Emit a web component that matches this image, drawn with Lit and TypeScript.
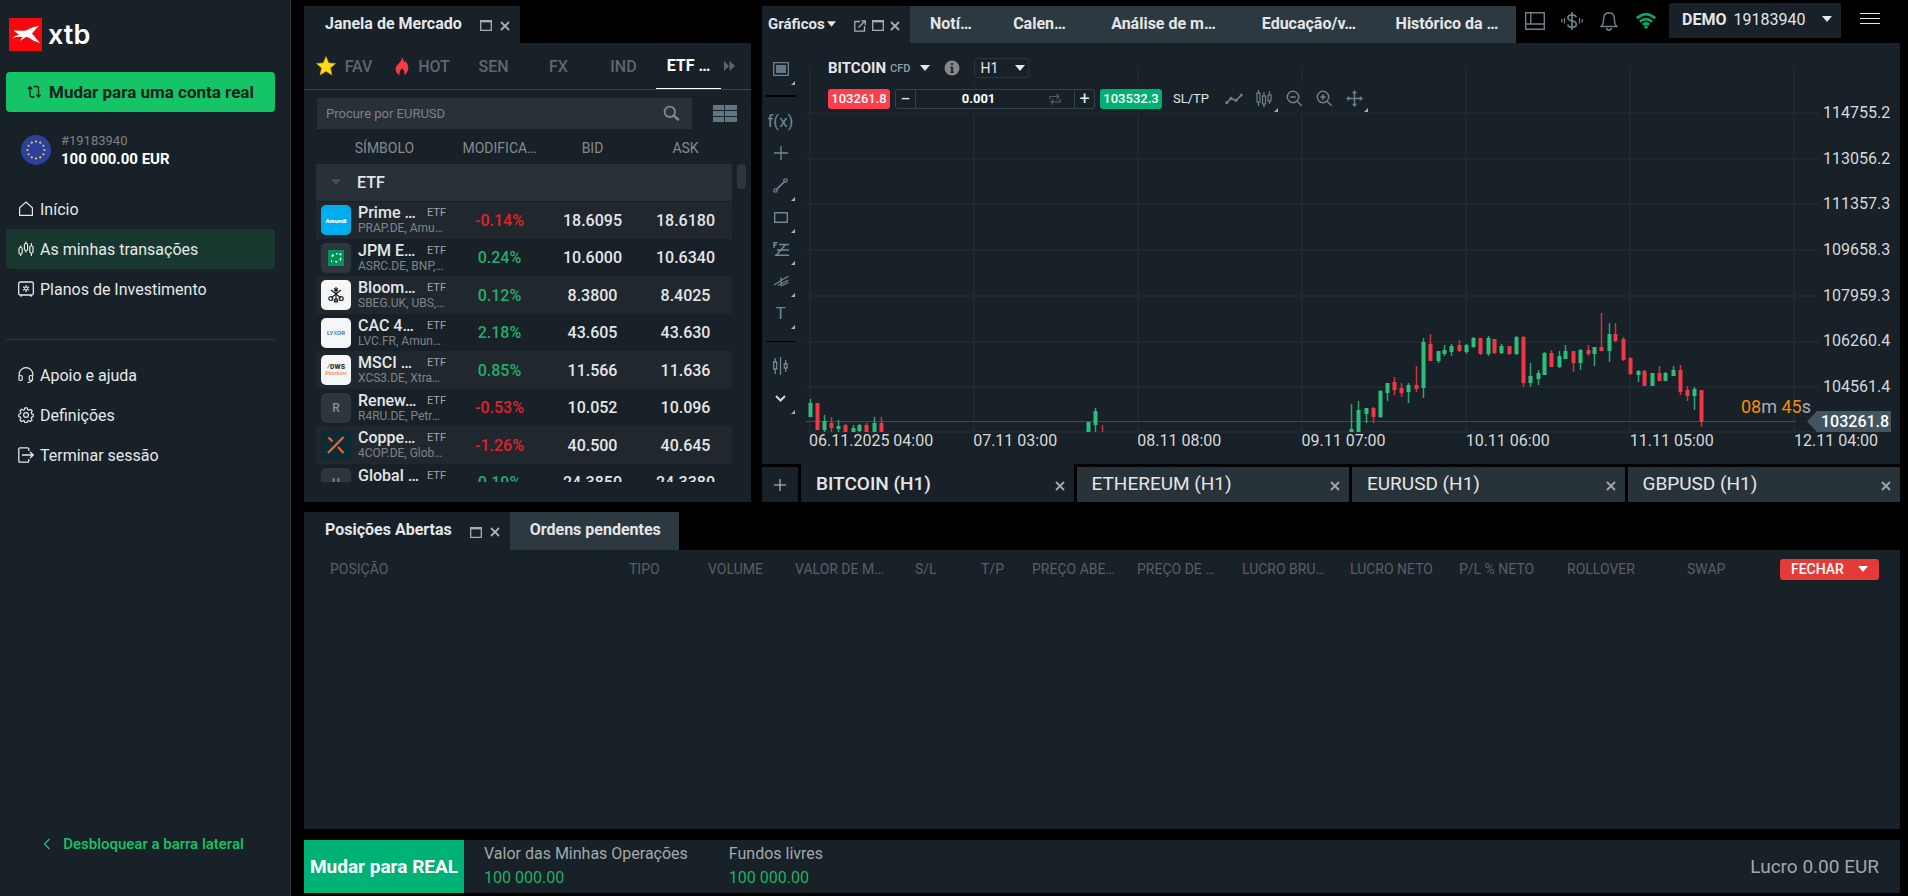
import { LitElement, html, css, svg, type TemplateResult, type SVGTemplateResult } from "lit";
import { customElement } from "lit/decorators.js";
import { classMap } from "lit/directives/class-map.js";

/* ---------- icons ---------- */

const box = (w: number, h: number, body: SVGTemplateResult): TemplateResult => html`
  <svg width=${w} height=${h} viewBox="0 0 ${w} ${h}" fill="none" stroke="currentColor" aria-hidden="true">${body}</svg>
`;

const icons = {
  swap: () => box(14, 14, svg`<path stroke-width="1.3" d="M3 2.2v8.3q0 1.500 1.500 1.500H7.500M1 4l2-2.300L5 4M6.500 1.500H10q1.500 0 1.500 1.500v8.500M9.500 9.800l2 2.300 2-2.300"/>`),
  home: () => box(16, 16, svg`<path stroke-width="1.2" d="M1.600 14.400V6.800L8 1l6.400 5.800v7.600z"/>`),
  candles: () => box(16, 16, svg`<g stroke-width="1.200"><rect x="1" y="6.500" width="3.200" height="6.500" rx="1.200"/><path d="M2.600 4.500v2M2.600 13v2"/><rect x="6.400" y="2.500" width="3.200" height="7" rx="1.200"/><path d="M8 .5v2M8 9.500v2"/><rect x="11.800" y="5" width="3.200" height="7" rx="1.200"/><path d="M13.400 2v3M13.400 12v3"/></g>`),
  safe: () => box(16, 16, svg`<rect x=".7" y="1" width="14.600" height="13" rx="1.500" stroke-width="1.300"/><path d="M3 14v1.800M13 14v1.800" stroke-width="1.500"/><path stroke-width="1.200" d="M8 4v7M5 5.700l6 3.600M11 5.700L5 9.300"/><circle cx="8" cy="7.500" r="1.500" fill="#182127" stroke-width="1"/>`),
  headset: () => box(16, 16, svg`<g stroke-width="1.200"><path d="M1.200 9V7.500a6.800 6.800 0 0 1 13.600 0V9"/><rect x="1" y="8.500" width="3.200" height="5" rx="1.300"/><rect x="11.300" y="8.500" width="3.200" height="5" rx="1.300"/><path d="M14.200 12.500q0 2.800-4.700 3"/></g>`),
  gear: () => box(16, 16, svg`<g stroke-width="1.200"><circle cx="8" cy="8" r="2.400"/><path stroke-linejoin="round" d="M6.800.9h2.400l.4 1.900 1.300.5 1.700-1 1.600 1.700-1 1.600.6 1.300 1.400.4v2.300l-1.500.5-.6 1.200 1 1.700-1.700 1.600-1.600-1-1.300.6-.4 1.500H6.800l-.4-1.600-1.200-.5-1.700 1-1.600-1.600 1-1.700-.6-1.200-1.500-.4V7.200l1.600-.5.5-1.200-1-1.600 1.700-1.700 1.600 1 1.200-.5z"/></g>`),
  logout: () => box(16, 16, svg`<path stroke-width="1.300" d="M10.800 4V2q0-1.200-1.200-1.200H2Q.8.800.8 2v12q0 1.200 1.200 1.200h7.600q1.200 0 1.200-1.200v-2M4 8h11M12 5l3.200 3L12 11"/>`),
  chevronLeft: () => box(8, 12, svg`<path stroke-width="1.300" d="M6.500 1L1.500 6l5 5"/>`),
  maximize: () => box(12, 11, svg`<path d="M.7 0v10.300h10.600V0" stroke-width="1.300"/><path d="M0 1.200h12" stroke-width="2.400"/>`),
  close: () => box(10, 10, svg`<path stroke-width="1.800" d="M1 1l8 8M9 1L1 9"/>`),
  popout: () => box(12, 12, svg`<path stroke-width="1.300" d="M6 1.500H.8v9.700h9.700V6M4.500 7.500l6-6M7.300.9h4v4"/>`),
  star: () => html`<svg width="20" height="20" viewBox="0 0 20 20" aria-hidden="true"><path fill="#ffd91a" stroke="#d8a800" stroke-width=".6" d="M10 .6l2.700 6.300 6.800.6-5.100 4.500 1.500 6.900L10 15.300 4.100 18.900 5.600 12 .5 7.500l6.800-.6z"/></svg>`,
  fire: () => html`<svg width="14" height="18" viewBox="0 0 14 18" aria-hidden="true"><path fill="#f83a45" d="M7.500 0c.3 2.600 1.400 4.200 2.800 5.800.2-1 .1-1.500.1-2.300 2.100 3 3.200 5.500 2.800 8.500-.3 2.900-2.200 5-4.200 5.800.9-2 .4-4-1.800-6.500C5.500 13 4 14.600 4.800 17.800 1.800 17 .2 14 .8 11c.6-3.700 5.600-5.200 6.700-11z"/></svg>`,
  forward: () => html`<svg width="11" height="10" viewBox="0 0 11 10" aria-hidden="true"><path fill="currentColor" d="M0 0l5 5-5 5zM5.500 0l5.500 5-5.500 5z"/></svg>`,
  search: () => box(17, 17, svg`<circle cx="6.800" cy="6.800" r="5.200" stroke-width="1.900"/><path stroke-width="2.400" d="M10.500 10.500l5.300 4.500"/>`),
  grid: () => html`<svg width="24" height="17" viewBox="0 0 24 17" aria-hidden="true"><path fill="#607783" d="M0 0h11v5H0zM12 0h12v5H12zM0 6h11v5H0zM12 6h12v5H12zM0 12h11v5H0zM12 12h12v5H12z"/></svg>`,
  caret: () => html`<svg width="10" height="6" viewBox="0 0 10 6" aria-hidden="true"><path fill="currentColor" d="M0 0h10L5 6z"/></svg>`,
  info: () => html`<svg width="16" height="16" viewBox="0 0 16 16" aria-hidden="true"><circle cx="8" cy="8" r="7.500" fill="#85888a"/><path fill="#2b3338" d="M6.900 3h2.300v2H6.900zM6.200 6.500h3v5H10V13H6.200v-1.500h.7V8h-.7z"/></svg>`,
  repeat: () => box(12, 12, svg`<path stroke-width="1.200" d="M.8 6V3.500h9M7.500 1l2.500 2.500L7.500 6M11.200 6v2.800h-9M4.500 6.500L2 9l2.500 2.500"/>`),
  trend: () => box(18, 12, svg`<path stroke-width="1.600" d="M1.500 10L6 5.500l5 2 5.500-5.500"/><g fill="currentColor" stroke="none"><circle cx="1.800" cy="9.800" r="1.500"/><circle cx="6" cy="5.300" r="1.500"/><circle cx="11" cy="7.300" r="1.500"/><circle cx="16.200" cy="2" r="1.500"/></g>`),
  bars: () => box(16, 18, svg`<g stroke-width="1.200"><path d="M2.500 0v3M2.500 12v4M8 2v4M8 14v3.500M13.500 1v4M13.500 11v3"/><rect x="1" y="3" width="3" height="9"/><rect x="6.500" y="6" width="3" height="8"/><rect x="12" y="5" width="3" height="6"/></g>`),
  zoomOut: () => box(17, 17, svg`<g stroke-width="1.500"><circle cx="7" cy="7" r="5.700"/><path d="M4.300 7h5.400M11.200 11.200l4.500 4.500"/></g>`),
  zoomIn: () => box(17, 17, svg`<g stroke-width="1.500"><circle cx="7" cy="7" r="5.700"/><path d="M4.300 7h5.400M7 4.300v5.400M11.200 11.200l4.500 4.500"/></g>`),
  move: () => box(17, 17, svg`<path stroke-width="1.400" d="M8.500 2v13M2 8.500h13"/><path fill="currentColor" stroke="none" d="M8.500 0l2.500 3.200H6zM8.500 17L6 13.800h5zM0 8.500L3.200 6v5zM17 8.500L13.800 6v5z"/>`),
  layout: () => box(20, 18, svg`<path stroke-width="1.400" d="M.7.700h18.600v16.600H.7zM.7 12h18.600M5.800.7V12"/>`),
  dollar: () => box(22, 20, svg`<path stroke-width="1.700" d="M15.300 6.200Q14.500 3.800 11 3.800q-4 0-4 2.900 0 2.500 4 3.100 4.300.7 4.300 3.500 0 3-4.300 3-3.700 0-4.300-2.700M11 1v18"/><path stroke-width="1.300" d="M3.500 7v5.500M.8 8v3.500M18.500 7v5.500M21.200 8v3.500"/>`),
  bell: () => box(18, 20, svg`<path stroke-width="1.500" stroke-linejoin="round" d="M1 15.500q2.500-1.500 2.500-6.500Q3.500 1.800 9 1.800T14.500 9q0 5 2.500 6.500z"/><path stroke-width="1.500" d="M6.500 17q.5 2.200 2.500 2.200t2.500-2.200"/>`),
  wifi: () => html`<svg width="20" height="16" viewBox="0 0 20 16" fill="none" stroke="#06a86c" stroke-width="2.700" aria-hidden="true"><path d="M.8 5.200q9.200-8 18.400 0M3.900 8.700q6.100-5.200 12.200 0M6.800 11.800q3.200-2.600 6.400 0"/><circle cx="10" cy="14" r="1.800" fill="#06a86c" stroke="none"/></svg>`,
  menu: () => box(20, 11, svg`<path stroke-width="1" d="M0 .5h20M0 5.500h20M0 10.500h20"/>`),
  template: () => html`<svg width="16" height="14" viewBox="0 0 16 14" aria-hidden="true"><path d="M.7.700h14.600v12.600H.7z" fill="none" stroke="#6c8490" stroke-width="1.300"/><path d="M3 3h10v8H3z" fill="#607985"/></svg>`,
  plus: () => box(14, 14, svg`<path stroke-width="1.300" d="M7 0v14M0 7h14"/>`),
  line: () => box(15, 15, svg`<path stroke-width="1.700" d="M3.500 11.500l8-8"/><circle cx="2.500" cy="12.500" r="1.700" stroke-width="1.200"/><circle cx="12.500" cy="2.500" r="1.700" stroke-width="1.200"/>`),
  rect: () => box(14, 11, svg`<path stroke-width="1.400" d="M.7.700h12.600v9.600H.7z"/>`),
  fibo: () => box(16, 14, svg`<path stroke-width="1.400" d="M1 6V.7h3.500M1 3h2.500M6 2.500h10M4 8h12M2 13.300h14M12.500 2.500L3.500 13"/>`),
  pitchfork: () => box(16, 12, svg`<path stroke-width="1.300" d="M1 10L15.500 1M5 10.500l10.500-5.500M8 11l7.500-3.500M8 2.500v8"/>`),
  volumes: () => box(15, 18, svg`<path stroke-width="1.300" d="M2.200 1v4M2.200 12v5M7.500 0v18M12.700 3v4M12.700 11v4M.7 5h3v7h-3zM11.300 7h2.800v4h-2.800z"/>`),
  chevronDown: () => box(11, 7, svg`<path stroke-width="2" d="M1 1l4.500 4.500L10 1"/>`),
};

/* ---------- shared styles ---------- */

const base = css`
  * { box-sizing: border-box; }
  :host { display: block; font-family: Roboto, "Liberation Sans", sans-serif; }
  button, input, select { font: inherit; color: inherit; border: 0; background: none; padding: 0; margin: 0; border-radius: 0; }
  button { cursor: pointer; }
  a { color: inherit; text-decoration: none; }
  svg { display: block; flex: none; }
  .tab { display: flex; align-items: center; height: 37px; padding-bottom: 2px; font-size: 16px; line-height: 20px; font-weight: 700; color: #e4e6e7; white-space: nowrap; }
  .tab svg { margin-top: 4px; color: #a9adaf; }
  .icon { display: flex; align-items: center; justify-content: center; }
`;

/* ---------- sidebar ---------- */

@customElement("side-bar")
class SideBar extends LitElement {
  static styles = [base, css`
    :host { background: #182127; border-right: 1px solid #2c343a; }
    .bar { display: flex; flex-direction: column; height: 100%; padding: 18px 15px 42px 6px; }
    .logo { display: flex; align-items: center; gap: 6px; height: 33px; padding-left: 3px; color: #fff; font: 600 27px/33px Inter, Roboto, sans-serif; }
    .cta { display: flex; align-items: center; justify-content: center; gap: 8px; height: 40px; margin-top: 21px; border-radius: 4px; background: #14c467; color: #12211c; font-size: 17px; font-weight: 700; }
    .account { display: flex; align-items: center; gap: 10px; margin-top: 18px; padding-left: 15px; height: 40px; }
    .number { font-size: 13px; line-height: 18px; color: #7b8185; }
    .balance { font-size: 15px; line-height: 18px; font-weight: 700; color: #fff; }
    nav { display: flex; flex-direction: column; margin-top: 19px; }
    nav + nav { margin-top: 30px; padding-top: 15px; border-top: 1px solid #2c343a; }
    nav a { display: flex; align-items: center; gap: 6px; height: 40px; padding-left: 12px; border-radius: 4px; color: #e6e8e9; font-size: 16px; }
    nav a.active { background: #18382f; }
    .unlock { display: flex; align-items: center; justify-content: center; gap: 12px; margin-top: auto; padding-left: 6px; color: #15c468; font-size: 15px; line-height: 20px; font-weight: 500; }
  `];

  private link(icon: TemplateResult, label: string, active = false) {
    return html`<a href="#" class=${classMap({ active })}>${icon}${label}</a>`;
  }

  render() {
    const stars = Array.from({ length: 12 }, (_, i) => {
      const a = (i * Math.PI) / 6;
      return svg`<circle cx=${15 + 8.5 * Math.sin(a)} cy=${15 - 8.5 * Math.cos(a)} r="1.100"/>`;
    });
    return html`
      <div class="bar">
        <div class="logo">
          <svg width="33" height="33" viewBox="0 0 33 33" aria-hidden="true">
            <rect width="33" height="33" fill="#f8080c"/>
            <path fill="#fff" d="M3 19.800q3-2.300 7-3.100l-5.500-4.200 10 .2q2.500 0 5-1.500 5-2.800 10.500-3.200-3.500 2.800-7 7.500 4 5 8 9.500-6.500-1.500-11.500-5.500-1.800-1-3.500 0l-5 3.500 2.500-4Q8.500 18.500 3 19.800z"/>
          </svg>
          <span>xtb</span>
        </div>
        <button class="cta">${icons.swap()}Mudar para uma conta real</button>
        <div class="account">
          <svg width="30" height="30" viewBox="0 0 30 30" aria-hidden="true">
            <circle cx="15" cy="15" r="15" fill="#2d409c"/><g fill="#e6d34a">${stars}</g>
          </svg>
          <div>
            <div class="number">#19183940</div>
            <div class="balance">100 000.00 EUR</div>
          </div>
        </div>
        <nav>
          ${this.link(icons.home(), "Início")}
          ${this.link(icons.candles(), "As minhas transações", true)}
          ${this.link(icons.safe(), "Planos de Investimento")}
        </nav>
        <nav>
          ${this.link(icons.headset(), "Apoio e ajuda")}
          ${this.link(icons.gear(), "Definições")}
          ${this.link(icons.logout(), "Terminar sessão")}
        </nav>
        <button class="unlock">${icons.chevronLeft()}Desbloquear a barra lateral</button>
      </div>
    `;
  }
}

/* ---------- market watch ---------- */

type Logo = "amundi" | "bnp" | "ubs" | "lyxor" | "dws" | "r" | "x" | "u";
interface Quote { logo: Logo; name: string; sub: string; change: string; bid: string; ask: string; }

const quotes: Quote[] = [
  { logo: "amundi", name: "Prime …", sub: "PRAP.DE, Amu…", change: "-0.14%", bid: "18.6095", ask: "18.6180" },
  { logo: "bnp", name: "JPM E…", sub: "ASRC.DE, BNP,…", change: "0.24%", bid: "10.6000", ask: "10.6340" },
  { logo: "ubs", name: "Bloom…", sub: "SBEG.UK, UBS,…", change: "0.12%", bid: "8.3800", ask: "8.4025" },
  { logo: "lyxor", name: "CAC 4…", sub: "LVC.FR, Amun…", change: "2.18%", bid: "43.605", ask: "43.630" },
  { logo: "dws", name: "MSCI …", sub: "XCS3.DE, Xtra…", change: "0.85%", bid: "11.566", ask: "11.636" },
  { logo: "r", name: "Renew…", sub: "R4RU.DE, Petr…", change: "-0.53%", bid: "10.052", ask: "10.096" },
  { logo: "x", name: "Coppe…", sub: "4COP.DE, Glob…", change: "-1.26%", bid: "40.500", ask: "40.645" },
  { logo: "u", name: "Global …", sub: "URNU.DE, Glob…", change: "0.19%", bid: "24.3850", ask: "24.3380" },
];

@customElement("market-panel")
class MarketPanel extends LitElement {
  static styles = [base, css`
    :host { display: flex; flex-direction: column; min-width: 0; min-height: 0; }
    .title { align-self: flex-start; margin-top: 3px; padding-left: 21px; padding-right: 10px; background: #182127; }
    .title button:first-of-type { margin-left: 18px; }
    .title button:last-of-type { margin-left: 8px; }
    .panel { flex: 1; min-height: 0; display: flex; flex-direction: column; padding-bottom: 20px; background: #182127; }
    .kinds { display: grid; grid-template-columns: 92px repeat(5, minmax(0, 1fr)) 30px; height: 47px; border-bottom: 1px solid #3a464e; }
    .kinds button { display: flex; align-items: center; justify-content: center; gap: 9px; font-size: 16px; font-weight: 500; color: #5d676d; white-space: nowrap; }
    .kinds .marked { padding-right: 12px; }
    .kinds .on { color: #fff; font-weight: 700; border-bottom: 1px solid #fff; }
    .kinds .more { justify-content: flex-start; padding-left: 3px; }
    .find { display: flex; align-items: center; justify-content: space-between; padding: 8px 14px 0 13px; }
    .field { display: flex; align-items: center; width: 375px; height: 31px; padding: 0 12px 0 9px; background: #293138; color: #7f898f; }
    .field input { flex: 1; min-width: 0; outline: 0; font-size: 13px; }
    .field input::placeholder { color: #7d8284; opacity: 1; }
    .list { display: flex; align-items: flex-start; flex: 1 1 0; min-height: 0; overflow: hidden; margin-top: 3px; padding: 0 5px 0 12px; gap: 5px; }
    .thumb { flex: none; width: 9px; height: 25px; margin-top: 32px; border-radius: 4px; background: #2c363d; }
    table { flex: 1; width: 100%; table-layout: fixed; border-collapse: collapse; }
    th, td { padding: 0; text-align: center; white-space: nowrap; }
    thead th { height: 32px; font-size: 14px; font-weight: 400; color: #848b8f; }
    .first { width: 137px; }
    .group th { height: 37px; border-bottom: 1px solid #182127; text-align: left; background: #293138; color: #e4e6e7; font-size: 16px; font-weight: 500; }
    .group button { display: flex; align-items: center; gap: 16px; padding-left: 15px; font-weight: 500; }
    .group svg { color: #43505a; }
    .quote td { height: 37px; font-size: 16px; font-weight: 500; color: #e4e6e7; }
    .quote:nth-child(even) { background: #20282e; }
    .quote:nth-child(even) td { height: 38px; }
    .quote .up { color: #26ad6b; }
    .quote .down { color: #e5202a; }
    .symbol { display: flex; align-items: center; gap: 7px; padding-left: 5px; text-align: left; }
    .logo { flex: none; display: flex; align-items: center; justify-content: center; width: 30px; height: 30px; border-radius: 5px; background: #2c363c; color: #8b9296; font-size: 12px; font-weight: 500; overflow: hidden; }
    .logo.white { background: #f5f6f8; }
    .logo.amundi { background: #00adee; color: #fff; font-size: 6px; font-weight: 900; }
    .logo.lyxor { color: #4d5a75; font-size: 6px; }
    .lyxor i { color: #17a9c9; font-style: normal; }
    .logo.dws { flex-direction: column; color: #3b3b3b; font-size: 7px; line-height: 6px; font-weight: 900; }
    .dws small { color: #f0a184; font-size: 5px; }
    .logo.x { background: #0d2b35; }
    .top { display: flex; align-items: center; justify-content: space-between; width: 88px; font-size: 16px; line-height: 17px; font-weight: 500; }
    .top span:last-child { font-size: 11px; font-weight: 400; color: #a0a6a9; }
    .sub { font-size: 12px; line-height: 15px; font-weight: 400; color: #7d8589; }
  `];

  private logo(kind: Logo): TemplateResult {
    switch (kind) {
      case "amundi": return html`<span class="logo amundi">Amundi</span>`;
      case "bnp": return html`<span class="logo"><svg width="16" height="16" viewBox="0 0 16 16"><rect width="16" height="16" fill="#00925b"/><path fill="#fff" d="M3 6l2-2 1 1-1 2zM8 3h2l-1 1.500H8zM11 4l2-1 .5 2-1.500.5zM12.500 7l1 2-1 2-1-1.500zM3 10l1.500 1L3 12.500zM7 11l3 .5L8 13z"/></svg></span>`;
      case "ubs": return html`<span class="logo white"><svg width="18" height="18" viewBox="0 0 18 18" fill="none" stroke="#222" stroke-width="1.200"><path d="M9 1v15M4 4l10 8M14 4L4 12M7 2.500l4 2.500M11 2.500L7 5"/><circle cx="3.800" cy="12.500" r="2"/><circle cx="14.200" cy="12.500" r="2"/><circle cx="9" cy="14.500" r="1.700"/></svg></span>`;
      case "lyxor": return html`<span class="logo white lyxor"><span>LY<i>X</i>OR</span></span>`;
      case "dws": return html`<span class="logo white dws"><span>⁄DWS</span><small>Xtrackers</small></span>`;
      case "x": return html`<span class="logo x"><svg width="18" height="18" viewBox="0 0 18 18" fill="none" stroke="#f2632f" stroke-width="2.200"><path d="M1.500 1.500l4 4M16.500 1L1 17M11 11l5.500 6"/></svg></span>`;
      case "r": return html`<span class="logo">R</span>`;
      default: return html`<span class="logo">U</span>`;
    }
  }

  render() {
    return html`
      <div class="tab title">
        Janela de Mercado
        <button aria-label="Maximizar">${icons.maximize()}</button>
        <button aria-label="Fechar">${icons.close()}</button>
      </div>
      <div class="panel">
        <div class="kinds">
          <button class="marked">${icons.star()}FAV</button>
          <button class="marked">${icons.fire()}HOT</button>
          <button>SEN</button>
          <button>FX</button>
          <button>IND</button>
          <button class="on">ETF …</button>
          <button class="more" aria-label="Mais">${icons.forward()}</button>
        </div>
        <div class="find">
          <label class="field"><input type="text" aria-label="Procurar" placeholder="Procure por EURUSD">${icons.search()}</label>
          <button aria-label="Vista">${icons.grid()}</button>
        </div>
        <div class="list">
          <table>
            <thead>
              <tr><th class="first">SÍMBOLO</th><th>MODIFICA…</th><th>BID</th><th>ASK</th></tr>
            </thead>
            <tbody>
              <tr class="group"><th colspan="4"><button>${icons.caret()}ETF</button></th></tr>
              ${quotes.map((q) => html`
                <tr class="quote">
                  <td>
                    <div class="symbol">
                      ${this.logo(q.logo)}
                      <div>
                        <div class="top"><span>${q.name}</span><span>ETF</span></div>
                        <div class="sub">${q.sub}</div>
                      </div>
                    </div>
                  </td>
                  <td class=${q.change.startsWith("-") ? "down" : "up"}>${q.change}</td>
                  <td>${q.bid}</td>
                  <td>${q.ask}</td>
                </tr>`)}
            </tbody>
          </table>
          <div class="thumb"></div>
        </div>
      </div>
    `;
  }
}

/* ---------- price plot ---------- */

/* [x, high, body top, body bottom, low, rising] in plot units, y growing downwards */
type Candle = [number, number, number, number, number, 0 | 1];

const candles: Candle[] = [
  [4, 332, 336, 350, 350, 1], [11, 336, 336, 363, 363, 0], [18, 348, 354, 363, 365, 1], [25, 350, 356, 361, 365, 0],
  [32, 353, 359, 362, 365, 1], [39, 357, 358, 365, 365, 0], [47, 358, 361, 365, 365, 1], [53, 357, 358, 364, 365, 1],
  [60, 356, 358, 365, 365, 0], [68, 350, 356, 365, 365, 1], [75, 350, 356, 365, 365, 0],
  [282, 355, 355, 365, 365, 1], [289, 341, 344, 358, 365, 1], [296, 358, 365, 365, 365, 0],
  [545, 337, 362, 365, 365, 1], [552, 334, 343, 365, 365, 1], [560, 341, 341, 347, 356, 1], [567, 340, 341, 350, 356, 0],
  [574, 323, 324, 350, 351, 1], [581, 316, 316, 326, 334, 1], [588, 310, 315, 323, 328, 0], [595, 316, 321, 326, 330, 0],
  [602, 316, 318, 325, 336, 1], [610, 299, 318, 322, 325, 0], [617, 271, 275, 321, 331, 1], [624, 267, 277, 294, 294, 0],
  [632, 284, 284, 294, 296, 1], [638, 278, 283, 287, 289, 1], [645, 277, 279, 285, 289, 1], [653, 273, 278, 284, 285, 0],
  [660, 277, 278, 285, 287, 1], [667, 270, 271, 280, 281, 1], [674, 271, 271, 287, 288, 0], [682, 269, 271, 287, 289, 1],
  [688, 272, 272, 286, 287, 0], [695, 277, 279, 286, 287, 1], [703, 279, 279, 287, 288, 0], [710, 269, 270, 287, 288, 1],
  [717, 269, 270, 316, 320, 0], [724, 296, 309, 316, 320, 1], [732, 303, 306, 312, 318, 1], [738, 285, 286, 308, 308, 1],
  [745, 283, 286, 300, 300, 0], [753, 284, 289, 300, 301, 1], [759, 278, 284, 292, 292, 1], [767, 284, 284, 296, 305, 0],
  [774, 282, 283, 296, 303, 1], [782, 278, 283, 287, 289, 0], [788, 280, 280, 287, 299, 1], [795, 246, 280, 284, 284, 0],
  [803, 256, 267, 284, 295, 1], [809, 256, 267, 274, 275, 0], [817, 270, 272, 293, 294, 0], [824, 290, 291, 307, 308, 0],
  [832, 303, 304, 308, 315, 1], [838, 303, 304, 319, 319, 0], [846, 306, 306, 319, 319, 1], [853, 299, 306, 314, 314, 0],
  [859, 305, 306, 314, 314, 1], [867, 299, 303, 309, 309, 1], [874, 298, 303, 325, 328, 0], [881, 319, 323, 329, 334, 0],
  [888, 320, 322, 329, 343, 1], [895, 323, 323, 355, 360, 0],
];

const PLOT_W = 1013;
const PLOT_H = 367;
const gridX = [4, 168, 332, 496, 660, 824, 988];
const gridY = [46, 92, 137, 183, 229, 275, 320, 365];

@customElement("chart-panel")
class ChartPanel extends LitElement {
  static styles = [base, css`
    :host { display: flex; flex-direction: column; min-width: 0; }
    .head { display: flex; height: 40px; }
    .tabs { display: flex; align-self: flex-end; }
    .tabs .tab { justify-content: center; background: #2d3940; }
    .tabs .main { width: 148px; justify-content: flex-start; padding-left: 6px; padding-right: 10px; background: #182127; }
    .main .name { display: flex; align-items: center; gap: 2px; margin-right: auto; font-weight: 700; font-size: 15px; }
    .tabs .main .name svg { width: 9px; margin-top: 0; color: #e4e6e7; }
    .main button + button { margin-left: 6px; }
    .slim { width: 82px; }
    .narrow { width: 95px; }
    .wide { width: 153px; }
    .mid { width: 138px; }
    .tools { display: flex; align-items: flex-start; margin-left: auto; color: #6d7f8a; }
    .tools .icon { width: 37px; height: 35px; }
    .tools .account { display: flex; align-items: center; gap: 7px; width: 172px; height: 35px; margin: 0 19px 0 5px; padding: 0 9px 3px 13px; border-radius: 3px 3px 0 0; background: #182127; color: #e4e6e7; font-size: 16px; }
    .account svg { margin-left: auto; }
    .account b { font-weight: 700; }
    .tools .menu { width: 20px; height: 31px; margin-right: 20px; color: #e4e6e7; }
    .body { display: flex; background: #182127; }
    .draw { display: flex; flex-direction: column; flex: none; width: 36px; padding-left: 4px; color: #6f8894; }
    .draw button { position: relative; display: flex; align-items: center; justify-content: center; width: 29px; height: 32px; font-size: 17px; line-height: 20px; }
    .more::after { content: ""; position: absolute; right: 0; bottom: 0; border: 2px solid; border-color: transparent #a9b0b4 #a9b0b4 transparent; }
    .draw .set { height: 42px; padding-top: 10px; }
    .draw .bright { color: #d5d9db; }
    .draw hr { flex: none; width: 30px; height: 1px; margin: 12px 0 8px; border: 0; background: #000; }
    .draw hr:first-of-type { height: 2px; margin: 10px 0 8px; }
    .area { position: relative; flex: 1; min-width: 0; padding: 24px 0 13px 8px; }
    .plot { display: flex; }
    .plot svg { flex: 1; min-width: 0; height: 367px; }
    .prices { display: flex; flex-direction: column; justify-content: space-between; flex: none; width: 81px; height: 294px; margin-top: 36px; padding-left: 4px; font-size: 16px; line-height: 20px; color: #d6d9da; }
    .dates { display: grid; grid-template-columns: repeat(6, minmax(0, 1fr)) 106px; margin-top: -4px; padding: 1px 0 0 3px; font-size: 16px; line-height: 20px; color: #d6d9da; white-space: nowrap; }
    .current { position: absolute; right: 9px; top: 368px; width: 84px; height: 21px; padding: 0 2px 0 14px; background: #435560; clip-path: polygon(0 50%, 10px 0, 100% 0, 100% 100%, 10px 100%); color: #fff; font-size: 16px; line-height: 21px; font-weight: 500; text-align: right; }
    .timer { position: absolute; right: 89px; top: 352px; font-size: 18px; line-height: 24px; color: #a9b1b6; }
    .timer span { color: #f58b00; }
    .controls { position: absolute; left: 20px; top: 12px; display: flex; flex-direction: column; gap: 3px; color: #e4e6e7; }
    .row { display: flex; align-items: center; align-self: flex-start; height: 26px; padding-left: 10px; background: #182127; }
    .row:last-child { height: 29px; }
    .market { display: flex; align-items: center; gap: 4px; font-size: 15px; font-weight: 700; }
    .market small { font-size: 11px; font-weight: 500; color: #8fa0aa; }
    .market svg { margin-left: 6px; }
    .row .info { margin: 0 14px; }
    .period { position: relative; display: flex; align-items: center; }
    .period select { appearance: none; width: 55px; height: 20px; padding-left: 5px; border: 1px solid #2a343b; border-radius: 3px; outline: 0; font-size: 14px; }
    .period svg { position: absolute; right: 4px; pointer-events: none; }
    .price { height: 20px; width: 62px; border-radius: 3px; font-size: 13px; line-height: 20px; font-weight: 500; color: #fff; text-align: center; }
    .sell { background: #fb3f4b; }
    .buy { background: #00b174; }
    .stepper { display: flex; align-items: center; width: 200px; height: 20px; margin: 0 5px; border: 1px solid #33414a; border-radius: 3px; }
    .stepper button { width: 20px; height: 18px; font-size: 18px; line-height: 16px; }
    .stepper button:first-child { border-right: 1px solid #33414a; }
    .stepper button:last-child { border-left: 1px solid #33414a; }
    .stepper input { flex: 1; min-width: 0; outline: 0; padding-right: 8px; text-align: center; font-size: 13px; font-weight: 700; color: #fff; }
    .stepper svg { margin-right: 13px; color: #52595d; }
    .row .sltp { margin: 0 10px 0 11px; font-size: 13px; }
    .row .tool { position: relative; display: flex; align-items: center; justify-content: center; width: 30px; height: 24px; color: #6f8189; }
    .row .tool.more::after { right: 1px; bottom: -1px; }
    .charts { display: grid; grid-template-columns: 36px repeat(4, minmax(0, 1fr)); column-gap: 3px; height: 38px; }
    .charts .sheet { display: flex; align-items: center; justify-content: space-between; margin-top: 3px; padding: 2px 9px 4px 15px; background: #283239; color: #e4e6e7; font-size: 19px; line-height: 22px; }
    .charts .sheet.on { margin-top: 0; padding-top: 5px; background: #182127; font-weight: 500; }
    .charts .sheet svg { color: #a2a8ab; margin-top: 4px; }
    .charts .add { display: flex; align-items: center; justify-content: center; margin-top: 3px; background: #182127; color: #c3c8ca; }
    .add svg { width: 12px; }
  `];

  private plot() {
    return html`
      <svg viewBox="0 0 ${PLOT_W} ${PLOT_H}" preserveAspectRatio="none" role="img" aria-label="BITCOIN H1">
        <g stroke="#1e292f" stroke-width="2">
          ${gridX.map((x) => svg`<path d="M${x} 0V${PLOT_H}"/>`)}
          ${gridY.map((y) => svg`<path d="M0 ${y}H${PLOT_W}"/>`)}
        </g>
        <path d="M0 354.500H990" stroke="#3f4c55"/>
        ${candles.map(([x, high, top, bottom, low, up]) => {
          const edge = up ? "#2fbd7c" : "#f23645";
          return svg`
            <path d="M${x + 0.5} ${high}V${low}" stroke=${edge} stroke-width="1.500" opacity=".85"/>
            ${bottom > top ? svg`<rect x=${x - 1.5} y=${top} width="4" height=${bottom - top} fill=${edge}/>` : null}`;
        })}
      </svg>
    `;
  }

  private sheet(name: string, on = false) {
    return html`
      <div class=${classMap({ sheet: true, on })}>
        <span>${name}</span><button aria-label="Fechar ${name}">${icons.close()}</button>
      </div>`;
  }

  render() {
    return html`
      <div class="head">
        <div class="tabs">
          <div class="tab main">
            <button class="name">Gráficos${icons.caret()}</button>
            <button aria-label="Destacar">${icons.popout()}</button>
            <button aria-label="Maximizar">${icons.maximize()}</button>
            <button aria-label="Fechar">${icons.close()}</button>
          </div>
          <button class="tab slim">Notí…</button>
          <button class="tab narrow">Calen…</button>
          <button class="tab wide">Análise de m…</button>
          <button class="tab mid">Educação/v…</button>
          <button class="tab mid">Histórico da …</button>
        </div>
        <div class="tools">
          <button class="icon" aria-label="Disposição">${icons.layout()}</button>
          <button class="icon" aria-label="Depósito">${icons.dollar()}</button>
          <button class="icon" aria-label="Notificações">${icons.bell()}</button>
          <span class="icon">${icons.wifi()}</span>
          <button class="account"><b>DEMO</b> 19183940 ${icons.caret()}</button>
          <button class="icon menu" aria-label="Menu">${icons.menu()}</button>
        </div>
      </div>
      <div class="body">
        <div class="draw">
          <button class="set more" aria-label="Modelos">${icons.template()}</button>
          <hr>
          <button aria-label="Indicadores">f(x)</button>
          <button aria-label="Cruz">${icons.plus()}</button>
          <button class="more" aria-label="Linha">${icons.line()}</button>
          <button class="more" aria-label="Forma">${icons.rect()}</button>
          <button class="more" aria-label="Fibonacci">${icons.fibo()}</button>
          <button class="more" aria-label="Forquilha">${icons.pitchfork()}</button>
          <button class="more" aria-label="Texto">T</button>
          <hr>
          <button aria-label="Volumes">${icons.volumes()}</button>
          <button class="bright more" aria-label="Mais">${icons.chevronDown()}</button>
        </div>
        <div class="area">
          <div class="plot">
            ${this.plot()}
            <div class="prices">
              ${["114755.2", "113056.2", "111357.3", "109658.3", "107959.3", "106260.4", "104561.4"].map((p) => html`<span>${p}</span>`)}
            </div>
          </div>
          <div class="dates">
            ${["06.11.2025 04:00", "07.11 03:00", "08.11 08:00", "09.11 07:00", "10.11 06:00", "11.11 05:00", "12.11 04:00"].map((d) => html`<span>${d}</span>`)}
          </div>
          <div class="timer"><span>08</span>m <span>45</span>s</div>
          <div class="current">103261.8</div>
          <div class="controls">
            <div class="row">
              <button class="market">BITCOIN <small>CFD</small>${icons.caret()}</button>
              <button class="info" aria-label="Informação">${icons.info()}</button>
              <span class="period">
                <select aria-label="Período"><option>H1</option></select>${icons.caret()}
              </span>
            </div>
            <div class="row">
              <button class="price sell">103261.8</button>
              <div class="stepper">
                <button aria-label="Menos">−</button>
                <input type="text" aria-label="Volume" value="0.001">
                ${icons.repeat()}
                <button aria-label="Mais">+</button>
              </div>
              <button class="price buy">103532.3</button>
              <button class="sltp">SL/TP</button>
              <button class="tool" aria-label="Linha de preço">${icons.trend()}</button>
              <button class="tool more" aria-label="Velas">${icons.bars()}</button>
              <button class="tool" aria-label="Reduzir">${icons.zoomOut()}</button>
              <button class="tool" aria-label="Ampliar">${icons.zoomIn()}</button>
              <button class="tool more" aria-label="Mover">${icons.move()}</button>
            </div>
          </div>
        </div>
      </div>
      <div class="charts">
        <button class="add" aria-label="Novo gráfico">${icons.plus()}</button>
        ${this.sheet("BITCOIN (H1)", true)}
        ${this.sheet("ETHEREUM (H1)")}
        ${this.sheet("EURUSD (H1)")}
        ${this.sheet("GBPUSD (H1)")}
      </div>
    `;
  }
}

/* ---------- open positions ---------- */

const columns: [string, number][] = [
  ["POSIÇÃO", 299], ["TIPO", 79], ["VOLUME", 87], ["VALOR DE M…", 120], ["S/L", 66], ["T/P", 51], ["PREÇO ABE…", 105],
  ["PREÇO DE …", 105], ["LUCRO BRU…", 108], ["LUCRO NETO", 109], ["P/L % NETO", 108], ["ROLLOVER", 120], ["SWAP", 93],
];

@customElement("positions-panel")
class PositionsPanel extends LitElement {
  static styles = [base, css`
    :host { display: flex; flex-direction: column; }
    .tabs { display: flex; }
    .tabs .tab { height: 38px; }
    .on { padding-left: 21px; padding-right: 10px; background: #182127; }
    .on button:first-of-type { margin-left: 18px; }
    .on button:last-of-type { margin-left: 8px; }
    .off { padding-left: 20px; padding-right: 18px; background: #2d3940; }
    .panel { flex: 1; padding-left: 26px; background: #182127; }
    table { width: 100%; table-layout: fixed; border-collapse: collapse; }
    th { height: 38px; padding: 0; text-align: left; font-size: 14px; font-weight: 400; color: #5a5f63; white-space: nowrap; }
    .close { display: flex; align-items: center; gap: 14px; height: 21px; padding: 0 11px; border-radius: 3px; background: #e43b38; color: #fff; font-size: 14px; font-weight: 500; }
  `];

  render() {
    const total = columns.reduce((sum, [, w]) => sum + w, 120);
    return html`
      <div class="tabs">
        <div class="tab on">
          Posições Abertas
          <button aria-label="Maximizar">${icons.maximize()}</button>
          <button aria-label="Fechar">${icons.close()}</button>
        </div>
        <button class="tab off">Ordens pendentes</button>
      </div>
      <div class="panel">
        <table>
          <thead>
            <tr>
              ${columns.map(([label, w]) => html`<th style="width:${(w / total) * 100}%">${label}</th>`)}
              <th><button class="close">FECHAR ${icons.caret()}</button></th>
            </tr>
          </thead>
        </table>
      </div>
    `;
  }
}

/* ---------- page ---------- */

@customElement("app-root")
class AppRoot extends LitElement {
  static styles = [base, css`
    :host { min-height: 100vh; background: #000; }
    .page { display: grid; grid-template-columns: 291px minmax(0, 1fr); min-height: 100vh; }
    main { display: flex; flex-direction: column; gap: 10px; padding: 3px 8px 3px 13px; }
    .upper { display: grid; grid-template-columns: 447px minmax(0, 1fr); gap: 11px; }
    positions-panel { flex: 1; }
    footer { display: flex; align-items: stretch; gap: 41px; height: 53px; margin-top: 1px; padding-right: 21px; background: #182127; font-size: 16px; line-height: 24px; color: #a3a8ab; }
    .real { width: 160px; margin-right: -21px; background: #00b276; color: #fff; font-size: 19px; font-weight: 700; white-space: nowrap; }
    .sum { padding-top: 2px; }
    .sum span { color: #1fb066; }
    .sum div, .sum span { display: block; }
    .profit { margin-left: auto; align-self: center; font-size: 19px; }
  `];

  render() {
    return html`
      <div class="page">
        <side-bar></side-bar>
        <main>
          <div class="upper">
            <market-panel></market-panel>
            <chart-panel></chart-panel>
          </div>
          <positions-panel></positions-panel>
          <footer>
            <button class="real">Mudar para REAL</button>
            <div class="sum"><div>Valor das Minhas Operações</div><span>100 000.00</span></div>
            <div class="sum"><div>Fundos livres</div><span>100 000.00</span></div>
            <div class="profit">Lucro 0.00 EUR</div>
          </footer>
        </main>
      </div>
    `;
  }
}
